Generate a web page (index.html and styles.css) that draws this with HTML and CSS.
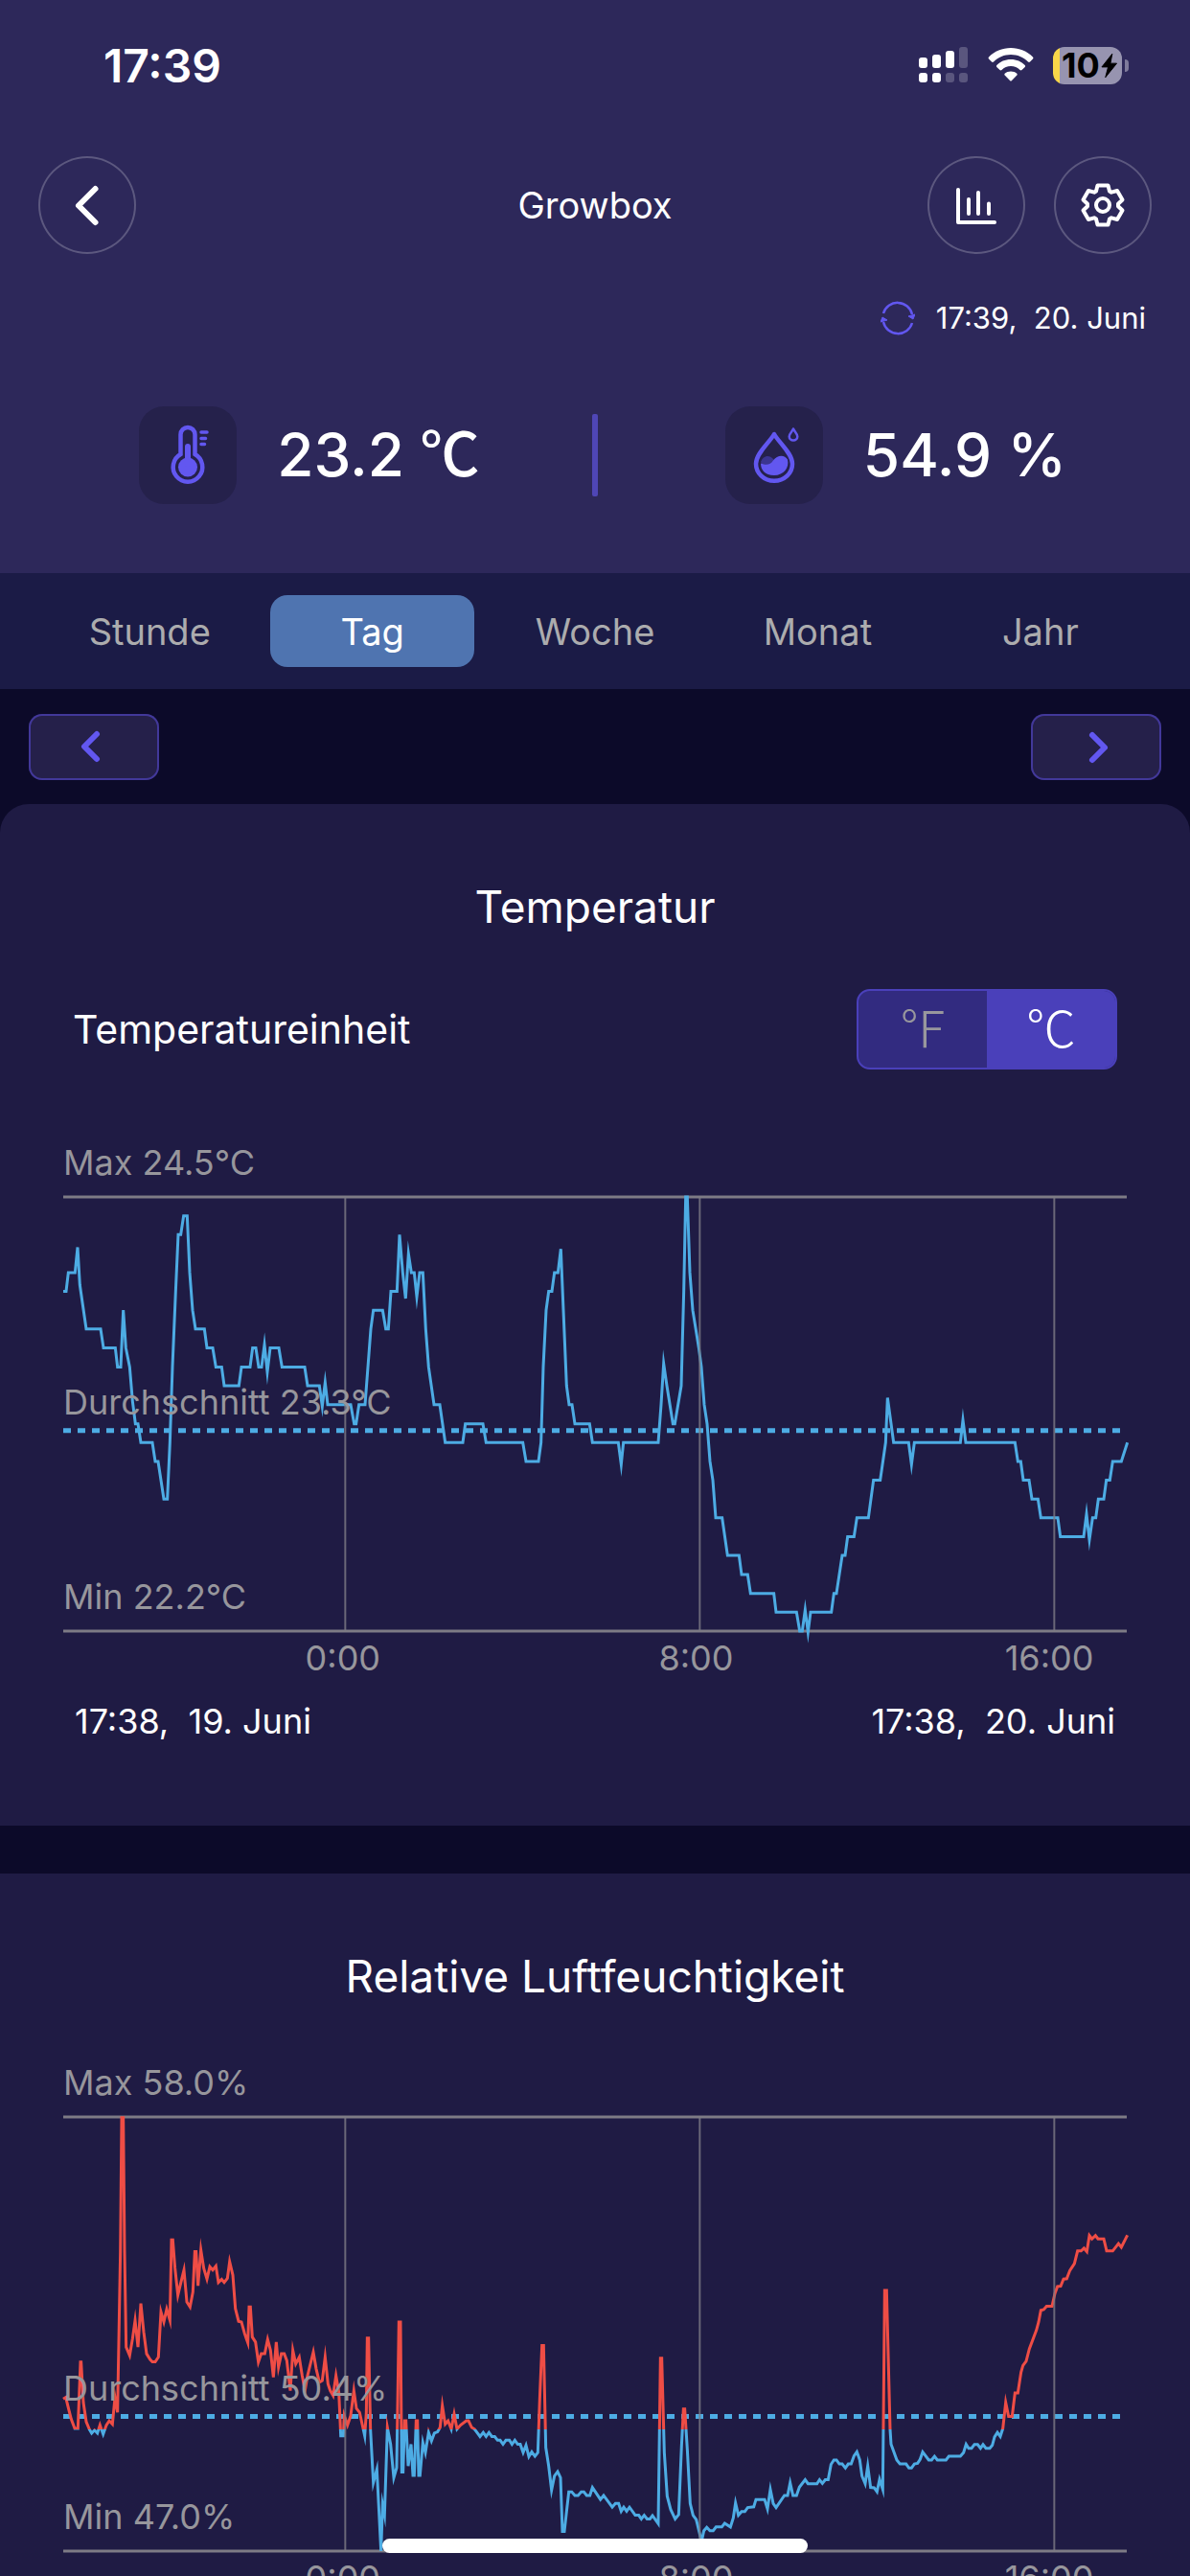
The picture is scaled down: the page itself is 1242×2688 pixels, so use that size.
FILE: index.html
```html
<!DOCTYPE html>
<html lang="de">
<head>
<meta charset="utf-8">
<meta name="viewport" content="width=device-width, initial-scale=1">
<title>Growbox</title>
<link rel="stylesheet" href="styles.css">
</head>
<body>
<header class="header">
  <div class="status">
    <span class="status-time">17:39</span>
    <div class="status-icons">
      <svg class="signal" viewBox="0 0 52 38" aria-hidden="true">
        <g fill="#fff"><rect x="0" y="11" width="9" height="11" rx="3"/><rect x="14" y="8" width="9" height="14" rx="3"/><rect x="28" y="4" width="9" height="18" rx="3"/><rect x="0" y="27" width="9" height="10" rx="3"/><rect x="14" y="27" width="9" height="10" rx="3"/></g>
        <g fill="#5a567e"><rect x="42" y="0" width="9" height="22" rx="3"/><rect x="28" y="27" width="9" height="10" rx="3"/><rect x="42" y="27" width="9" height="10" rx="3"/></g>
      </svg>
      <svg class="wifi" viewBox="0 0 48 38" aria-hidden="true">
        <path fill="#fff" d="M24 1C33 1 41 4.500 47 10.500Q48 11.500 47 12.500L44 15.500Q43 16.300 42 15.500C37 10.700 31 8 24 8S11 10.700 6 15.500Q5 16.300 4 15.500L1 12.500Q0 11.500 1 10.500C7 4.500 15 1 24 1Z"/>
        <path fill="#fff" d="M24 13C30 13 35 15.300 38.700 19Q39.600 20 38.700 21L35.500 24Q34.500 24.800 33.500 24C31 21.500 27.700 20 24 20S17 21.500 14.500 24Q13.500 24.800 12.500 24L9.300 21Q8.400 20 9.300 19C13 15.300 18 13 24 13Z"/>
        <path fill="#fff" d="M24 25.500C26.500 25.500 28.700 26.300 30.300 27.700Q31.200 28.600 30.300 29.600L25 35Q24 36 23 35L17.700 29.600Q16.800 28.600 17.700 27.700C19.300 26.300 21.500 25.500 24 25.500Z"/>
      </svg>
      <div class="battery">
        <div class="battery-body">
          <span>10</span>
          <svg class="bolt" viewBox="0 0 18 28" aria-hidden="true"><path d="M12.500 1L1 15.500H8L5 27L17.500 11.500H10.500Z" fill="#000" stroke="#000" stroke-linejoin="round"/></svg>
        </div>
        <div class="battery-tip"></div>
      </div>
    </div>
  </div>

  <div class="toolbar">
    <div class="toolbar-side">
      <button class="round-button" type="button" aria-label="Zurück">
        <svg viewBox="0 0 102 102" aria-hidden="true"><path d="M59.500 34L42 51.500L59.500 69" class="stroke-white thick"/></svg>
      </button>
    </div>
    <h1 class="title">Growbox</h1>
    <div class="toolbar-side toolbar-end">
      <button class="round-button" type="button" aria-label="Statistik">
        <svg viewBox="0 0 102 102" aria-hidden="true"><path d="M32 35V69H70M43 45V60M53 38V60M64 49.500V60" class="stroke-white"/></svg>
      </button>
      <button class="round-button" type="button" aria-label="Einstellungen">
        <svg viewBox="0 0 102 102" aria-hidden="true">
          <g transform="translate(51 51)" class="stroke-white">
            <path d="M-5.500-20.500H5.500L7-14.500L9-13.300L15-15L20.500-5.500L16-1.200V1.200L20.500 5.500L15 15L9 13.300L7 14.500L5.500 20.500H-5.500L-7 14.500L-9 13.300L-15 15L-20.500 5.500L-16 1.200V-1.200L-20.500-5.500L-15-15L-9-13.300L-7-14.500Z"/>
            <circle r="7"/>
          </g>
        </svg>
      </button>
    </div>
  </div>

  <div class="updated">
    <svg class="refresh" viewBox="0 0 36 36" aria-hidden="true">
      <path d="M3 13A15.500 15.500 0 0 1 33 14M33 23A15.500 15.500 0 0 1 3 22" fill="none" stroke="#6257f0" stroke-width="2.500"/>
      <path d="M29 16L36 14L34 19ZM7 20L0 22L2 17Z" fill="#6257f0" stroke="#6257f0" stroke-linejoin="round"/>
    </svg>
    <span class="stamp">17:39,  20. Juni</span>
  </div>

  <div class="metrics">
    <div class="metric metric-temperature">
      <svg class="metric-icon" viewBox="0 0 102 102" aria-hidden="true">
        <path d="M43.500 50V29.500A7.500 7.500 0 0 1 58.500 29.500V50A15.300 15.300 0 1 1 43.500 50Z" fill="none" stroke="#6257f0" stroke-width="4.500"/>
        <circle cx="51" cy="63.500" r="10" fill="#6257f0"/>
        <path d="M51 42V60" fill="none" stroke="#6257f0" stroke-width="6" stroke-linecap="round"/>
        <path d="M65 27H71M65 33.500H69.500M65 39.500H68.500" stroke="#6257f0" stroke-width="3.500" stroke-linecap="round"/>
      </svg>
      <span class="metric-value">23.2 <span class="degree">℃</span></span>
    </div>
    <div class="metric-divider"></div>
    <div class="metric metric-humidity">
      <svg class="metric-icon" viewBox="0 0 102 102" aria-hidden="true">
        <path d="M51 29C46 38 32 49 32 60A19 17.800 0 0 0 70 60C70 49 56 38 51 29Z" fill="none" stroke="#6257f0" stroke-width="4.500" stroke-linejoin="round"/>
        <path d="M37 58C39 52 45 50 49 54L55 60L40 64Z" fill="#3b3590"/>
        <path d="M37 59.500C43 62 47 61 50 56.500C54 50.500 62 50 65 55.500C67 64 61 72 51 72S37 66 37 59.500Z" fill="#6257f0"/>
        <path d="M71 23.500C70 26 66.700 28.500 66.700 31.500A4.300 4 0 0 0 75.300 31.500C75.300 28.500 72 26 71 23.500Z" fill="none" stroke="#6257f0" stroke-width="2.500" stroke-linejoin="round"/>
      </svg>
      <span class="metric-value">54.9 %</span>
    </div>
  </div>
</header>

<nav class="ranges" aria-label="Zeitraum">
  <button type="button" class="range">Stunde</button>
  <button type="button" class="range range-active" aria-current="true">Tag</button>
  <button type="button" class="range">Woche</button>
  <button type="button" class="range">Monat</button>
  <button type="button" class="range">Jahr</button>
</nav>

<div class="pager">
  <button class="page-button" type="button" aria-label="Zurückblättern">
    <svg viewBox="0 0 136 68" aria-hidden="true"><path d="M71 20L58 33L71 46"/></svg>
  </button>
  <button class="page-button" type="button" aria-label="Vorblättern">
    <svg viewBox="0 0 136 68" aria-hidden="true"><path d="M64 21L77 34L64 47"/></svg>
  </button>
</div>

<main class="cards">
  <section class="card card-first">
    <h2 class="card-title">Temperatur</h2>
    <fieldset class="unit">
      <legend class="sr">Einheit</legend>
      <span class="unit-label">Temperatureinheit</span>
      <div class="toggle">
        <input type="radio" name="unit" id="unit-f" class="sr"><label for="unit-f">℉</label>
        <input type="radio" name="unit" id="unit-c" class="sr" checked><label for="unit-c">℃</label>
      </div>
    </fieldset>
    <div class="chart">
      <p class="level">Max 24.5°C</p>
      <div class="plot" style="--avg: 53.8%">
        <svg class="plot-svg" viewBox="78 193 3330 1269" preserveAspectRatio="none" role="img" aria-label="Temperaturverlauf">
          <path class="rule" d="M78 193H3408M78 1462H3408"/>
          <path class="average" d="M78 876H3390"/>
          <polyline class="series blue" points="78,469 87,469 94,414 115,414 123,340 130,450 150,579 195,579 204,634 241,634 248,690 258,690 266,524 274,634 286,690 295,790 304,856 312,856 321,911 357,911 366,966 375,966 393,1076 404,1076 412,911 420,690 430,469 438,303 446,303 455,248 466,248 474,414 483,524 492,579 520,579 528,634 546,634 556,690 574,690 582,745 628,745 636,690 663,690 671,634 681,634 690,690 699,690 708,625 717,705 726,634 753,634 763,690 834,690 843,745 880,745 889,805 898,735 906,800 978,800 989,856 995,856 1004,800 1023,800 1032,690 1041,579 1049,524 1078,524 1088,579 1096,579 1104,469 1123,469 1131,303 1141,414 1150,490 1159,359 1168,414 1177,414 1185,485 1194,414 1204,414 1213,579 1222,690 1239,800 1257,800 1274,911 1329,911 1337,856 1392,856 1402,911 1517,911 1527,966 1566,966 1574,911 1581,690 1590,524 1598,469 1608,469 1616,414 1627,414 1636,345 1644,524 1654,745 1662,800 1671,800 1680,856 1726,856 1735,911 1816,911 1825,975 1832,911 1941,911 1950,800 1958,680 1968,745 1987,856 1993,856 2013,745 2021,469 2027,193 2032,193 2040,414 2049,524 2068,634 2076,690 2085,800 2094,856 2103,966 2112,1021 2121,1131 2141,1131 2158,1241 2194,1241 2202,1297 2221,1297 2230,1352 2303,1352 2310,1407 2374,1407 2384,1462 2392,1462 2401,1400 2410,1465 2418,1407 2483,1407 2491,1352 2499,1352 2517,1241 2526,1241 2534,1186 2554,1186 2563,1131 2599,1131 2615,1021 2636,1021 2653,911 2659,780 2678,911 2725,911 2734,975 2743,911 2887,911 2895,845 2904,911 3058,911 3067,966 3076,966 3084,1021 3102,1021 3111,1076 3130,1076 3139,1131 3192,1131 3200,1186 3273,1186 3282,1120 3291,1195 3301,1131 3311,1131 3319,1076 3336,1076 3344,1021 3355,1021 3364,966 3391,966 3410,911"/>
          <path class="tick" d="M961 193V1462M2071 193V1462M3181 193V1462"/>
        </svg>
        <p class="level level-avg">Durchschnitt 23.3°C</p>
        <p class="level level-min">Min 22.2°C</p>
      </div>
      <div class="axis"><span>0:00</span><span>8:00</span><span>16:00</span></div>
    </div>
    <div class="dates"><span>17:38,  19. Juni</span><span>17:38,  20. Juni</span></div>
  </section>

  <section class="card">
    <h2 class="card-title">Relative Luftfeuchtigkeit</h2>
    <div class="chart chart-after-title">
      <p class="level">Max 58.0%</p>
      <div class="plot" style="--avg: 69%">
        <svg class="plot-svg" viewBox="78 198 3330 1296" preserveAspectRatio="none" role="img" aria-label="Verlauf der Luftfeuchtigkeit">
          <defs>
            <linearGradient id="threshold" gradientUnits="userSpaceOnUse" x1="0" y1="198" x2="0" y2="1494">
              <stop offset=".72" stop-color="#ef4d45"/><stop offset=".72" stop-color="#4dace4"/>
            </linearGradient>
          </defs>
          <path class="rule" d="M78 198H3408M78 1494H3408"/>
          <path class="average" d="M78 1092H3390"/>
          <polyline class="series" stroke="url(#threshold)" points="78,1040 86,1035 95,1070 103,1100 114,1128 124,1128 132,930 134,930 141,1050 150,1108 160,1131 167,1142 176,1133 185,1142 193,1118 203,1145 213,1118 222,1105 232,1115 240,1035 248,1080 257,600 261,200 266,200 270,600 275,885 286,910 295,860 303,805 312,885 321,755 330,840 339,905 350,922 357,929 366,929 376,915 384,780 393,810 402,772 412,805 417,565 421,565 428,650 437,730 447,690 456,655 465,750 475,765 484,720 490,600 494,600 500,702 509,595 518,650 528,682 537,645 546,655 556,643 564,692 574,683 582,692 592,680 599,630 609,670 617,770 627,808 636,810 646,845 656,872 660,765 664,765 670,855 680,870 689,930 698,905 709,905 718,862 727,895 736,975 745,870 752,945 761,905 770,905 778,925 789,1015 797,895 806,935 817,915 826,970 835,1015 843,970 852,935 861,900 870,950 880,990 889,985 898,915 907,995 914,1015 923,1030 932,970 941,1020 947,1150 955,1150 958,1090 968,1118 978,1090 988,1015 996,1068 1006,1080 1022,1150 1027,1080 1030,858 1034,858 1040,1131 1049,1290 1060,1250 1073,1494 1078,1355 1084,1385 1093,1125 1103,1175 1113,1275 1122,1245 1129,810 1134,810 1138,1258 1142,1258 1147,1105 1151,1105 1158,1240 1167,1175 1173,1268 1177,1268 1183,1105 1187,1105 1191,1268 1195,1268 1204,1170 1212,1200 1222,1140 1231,1165 1240,1142 1250,1138 1258,1125 1265,1060 1274,1115 1283,1105 1293,1130 1302,1085 1311,1130 1322,1118 1340,1105 1347,1105 1357,1125 1366,1130 1383,1152 1393,1140 1402,1152 1411,1140 1420,1152 1429,1152 1438,1163 1446,1163 1455,1175 1464,1163 1475,1163 1483,1175 1492,1163 1501,1175 1509,1175 1518,1200 1527,1178 1536,1212 1545,1198 1555,1211 1564,1200 1570,1040 1577,880 1582,880 1589,1185 1598,1240 1607,1312 1616,1270 1626,1257 1635,1275 1641,1435 1647,1435 1661,1317 1670,1317 1680,1328 1690,1328 1700,1317 1708,1317 1717,1328 1727,1328 1735,1304 1760,1340 1770,1328 1797,1363 1807,1352 1817,1352 1825,1375 1833,1363 1842,1375 1851,1363 1869,1387 1880,1387 1888,1398 1897,1387 1906,1398 1915,1398 1923,1388 1941,1412 1948,918 1952,918 1960,1200 1969,1330 1980,1370 1994,1398 2005,1385 2014,1180 2020,1070 2024,1070 2032,1190 2041,1352 2050,1387 2060,1400 2074,1455 2079,1455 2084,1433 2093,1423 2103,1433 2113,1433 2122,1422 2140,1422 2149,1411 2167,1422 2176,1395 2183,1350 2192,1387 2202,1376 2212,1376 2221,1364 2240,1362 2247,1340 2274,1340 2283,1368 2292,1310 2301,1352 2310,1364 2336,1328 2346,1328 2354,1290 2363,1328 2374,1328 2383,1303 2401,1281 2410,1293 2438,1293 2446,1281 2455,1292 2464,1281 2473,1281 2482,1235 2491,1222 2499,1222 2508,1234 2517,1234 2527,1246 2536,1234 2545,1234 2554,1210 2563,1198 2572,1222 2579,1270 2589,1293 2597,1240 2606,1304 2617,1305 2626,1317 2634,1280 2644,1310 2650,716 2656,716 2667,1131 2670,1175 2688,1222 2698,1234 2717,1234 2726,1246 2734,1246 2743,1234 2753,1232 2761,1220 2769,1198 2788,1222 2797,1222 2806,1211 2815,1222 2842,1222 2851,1211 2887,1211 2897,1200 2905,1175 2913,1187 2922,1187 2931,1176 2941,1176 2950,1187 2958,1176 2967,1187 2979,1187 2987,1178 2994,1153 3003,1140 3012,1152 3020,1128 3029,1050 3038,1092 3049,1092 3058,1022 3067,1022 3077,960 3083,940 3093,927 3103,890 3125,835 3132,810 3139,775 3148,773 3157,763 3174,763 3183,725 3191,704 3201,703 3210,682 3220,681 3230,656 3244,636 3254,598 3265,598 3274,590 3283,600 3291,552 3299,562 3310,552 3318,562 3336,562 3345,598 3364,598 3382,576 3391,587 3410,551"/>
          <path class="tick" d="M961 198V1494M2071 198V1494M3181 198V1494"/>
        </svg>
        <p class="level level-avg">Durchschnitt 50.4%</p>
        <p class="level level-min">Min 47.0%</p>
      </div>
      <div class="axis"><span>0:00</span><span>8:00</span><span>16:00</span></div>
    </div>
  </section>
</main>
<div class="home-indicator"></div>
</body>
</html>
```
FILE: styles.css
```css
* {
  box-sizing: border-box;
}

body {
  margin: 0;
  height: 100vh;
  display: flex;
  flex-direction: column;
  overflow: hidden;
  position: relative;
  background: #0c0a29;
  color: #fff;
  font-family: Inter, "Noto Sans CJK JP", sans-serif;
  font-size: 38px;
}

h1, h2, p {
  margin: 0;
  font-weight: 400;
}

button {
  font: inherit;
  color: inherit;
  padding: 0;
  border: 0;
  background: none;
}

svg {
  display: block;
}

.sr {
  position: absolute;
  width: 1px;
  height: 1px;
  margin: 0;
  padding: 0;
  overflow: hidden;
  opacity: 0;
}

/* Header */
.header {
  flex: none;
  padding-bottom: 72px;
  background: #2d285a;
}

.status {
  display: flex;
  justify-content: space-between;
  align-items: center;
  height: 136px;
  padding: 0 64px 0 108px;
}

.status-time {
  font-size: 48px;
  font-weight: 600;
}

.status-icons {
  display: flex;
  align-items: center;
  gap: 20px;
}

.signal {
  width: 52px;
  height: 38px;
}

.wifi {
  width: 48px;
  height: 38px;
}

.battery {
  display: flex;
  align-items: center;
  gap: 3px;
}

.battery-body {
  display: flex;
  align-items: center;
  justify-content: center;
  gap: 1px;
  width: 72px;
  height: 39px;
  padding-left: 4px;
  border-radius: 12px;
  background: linear-gradient(90deg, #f8d649 7px, #9794b0 7px);
  color: #000;
  font-size: 36px;
  font-weight: 700;
  line-height: 39px;
}

.bolt {
  width: 17px;
  height: 27px;
}

.battery-tip {
  width: 4px;
  height: 13px;
  border-radius: 0 4px 4px 0;
  background: #7f7b9c;
}

.toolbar {
  display: flex;
  align-items: center;
  padding: 27px 40px 0;
}

.toolbar-side {
  flex: 1;
  display: flex;
  gap: 30px;
}

.toolbar-end {
  justify-content: flex-end;
}

.round-button {
  width: 102px;
  height: 102px;
  border-radius: 50%;
  box-shadow: inset 0 0 0 2px #5c587f;
}

.stroke-white {
  fill: none;
  stroke: #fff;
  stroke-width: 4;
  stroke-linecap: round;
  stroke-linejoin: round;
}

.thick {
  stroke-width: 6;
}

.title {
  font-size: 38px;
}

.updated {
  display: flex;
  justify-content: flex-end;
  align-items: center;
  gap: 22px;
  margin-top: 47px;
  padding: 0 46px;
  font-size: 31px;
  line-height: 40px;
}

.stamp {
  white-space: pre;
}

.refresh {
  width: 36px;
  height: 36px;
}

.metrics {
  display: grid;
  grid-template-columns: 1fr 6px 1fr;
  align-items: center;
  margin-top: 72px;
}

.metric {
  display: flex;
  justify-content: center;
  align-items: center;
  gap: 42px;
}

.metric-temperature {
  padding-left: 28px;
}

.metric-humidity {
  padding-left: 4px;
}

.metric-icon {
  width: 102px;
  height: 102px;
  border-radius: 26px;
  background: #25214b;
}

.metric-value {
  font-size: 62px;
  font-weight: 500;
  line-height: 102px;
}

.degree {
  font-family: "Noto Sans CJK JP", sans-serif;
  line-height: 1;
}

.metric-divider {
  height: 86px;
  border-radius: 2px;
  background: #4f46b6;
}

/* Range tabs */
.ranges {
  flex: none;
  display: flex;
  gap: 20px;
  padding: 23px 50px;
  background: #1b1b46;
}

.range {
  flex: 1;
  height: 75px;
  border-radius: 18px;
  color: #acacae;
}

.range-active {
  background: #4f74b0;
  color: #fff;
}

/* Paging */
.pager {
  flex: none;
  display: flex;
  justify-content: space-between;
  padding: 26px 30px 25px;
}

.page-button {
  width: 136px;
  height: 69px;
  border-radius: 14px;
  background: #25204a;
  box-shadow: inset 0 0 0 2px #42389a;
}

.page-button path {
  fill: none;
  stroke: #6257f0;
  stroke-width: 6;
  stroke-linecap: round;
  stroke-linejoin: round;
}

/* Chart cards */
.cards {
  flex: 1;
  min-height: 0;
  display: flex;
  flex-direction: column;
  gap: 50px;
  overflow-y: auto;
  scrollbar-width: none;
}

.card {
  flex: none;
  padding: 79px 66px 87px;
  background: #1f1b44;
}

.card-first {
  border-radius: 30px 30px 0 0;
}

.card-title {
  font-size: 46px;
  line-height: 56px;
  text-align: center;
}

.unit {
  display: flex;
  justify-content: space-between;
  align-items: center;
  margin: 58px 0 75px;
  padding: 0 10px;
  border: 0;
  font-size: 41px;
}

.toggle {
  display: flex;
  width: 272px;
  height: 84px;
  border: 2px solid #4a40ba;
  border-radius: 14px;
  overflow: hidden;
  background: #322b80;
  color: #98979d;
  font-family: "Noto Sans CJK JP", sans-serif;
  font-size: 52px;
  font-weight: 300;
}

.toggle label {
  flex: 1;
  line-height: 74px;
  text-align: center;
}

.toggle input:checked + label {
  background: #4a40ba;
  color: #fff;
}

.chart-after-title {
  margin-top: 61px;
}

.level {
  color: #97969c;
  font-size: 36px;
  line-height: 44px;
}

.plot {
  position: relative;
  margin-top: 14px;
}

.plot-svg {
  width: 100%;
  height: 453px;
  overflow: visible;
}

.plot-svg path,
.plot-svg polyline {
  fill: none;
  vector-effect: non-scaling-stroke;
}

.rule {
  stroke: #7d7b85;
  stroke-width: 3;
}

.tick {
  stroke: #7d7b85;
  stroke-width: 2;
  opacity: .8;
}

.average {
  stroke: #4dace4;
  stroke-width: 5;
  stroke-dasharray: 8 7;
}

.series {
  stroke-width: 3;
  stroke-miterlimit: 10;
}

.blue {
  stroke: #4dace4;
}

/* Captions lie over the curve, just above the line they name */
.level-avg {
  position: absolute;
  left: 0;
  top: calc(var(--avg) - 52px);
}

.level-min {
  position: absolute;
  left: 0;
  bottom: 14px;
}

/* Each label is centred under its grid line */
.axis {
  display: flex;
  justify-content: space-between;
  margin-top: 6px;
  padding-left: 19%;
  color: #97969c;
  font-size: 36px;
  line-height: 44px;
}

.axis span {
  width: 18%;
  text-align: center;
}

.dates {
  display: flex;
  justify-content: space-between;
  margin-top: 22px;
  padding: 0 12px;
  font-size: 36px;
  line-height: 44px;
  white-space: pre;
}

.home-indicator {
  position: absolute;
  left: 50%;
  bottom: 24px;
  width: 444px;
  max-width: 60%;
  height: 15px;
  margin-left: -222px;
  border-radius: 8px;
  background: #fff;
}
```
